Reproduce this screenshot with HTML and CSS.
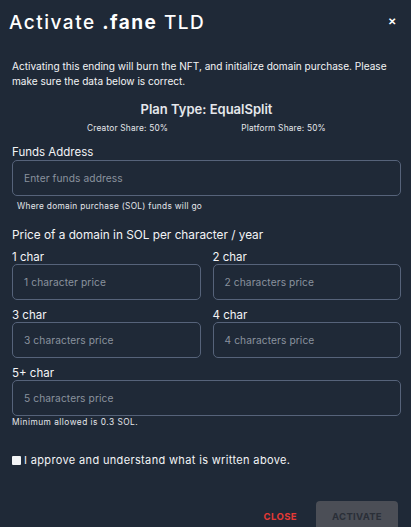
FILE: index.html
```html
<!DOCTYPE html>
<html>
<head>
<meta charset="utf-8">
<link rel="stylesheet" href="styles.css">
</head>
<body>
<div class="modal">
  <div class="header">
    <h1 class="title">Activate <b>.fane</b> TLD</h1>
    <span class="close-x">&#x2715;</span>
  </div>
  <p class="intro">Activating this ending will burn the NFT, and initialize domain purchase. Please make sure the data below is correct.</p>
  <div class="plan">Plan Type: EqualSplit</div>
  <div class="shares">
    <span>Creator Share: 50%</span>
    <span>Platform Share: 50%</span>
  </div>
  <label class="label label-funds">Funds Address</label>
  <div class="input wide">Enter funds address</div>
  <div class="helper">Where domain purchase (SOL) funds will go</div>
  <div class="section">Price of a domain in SOL per character / year</div>
  <div class="grid">
    <div class="field">
      <label class="label">1 char</label>
      <div class="input">1 character price</div>
    </div>
    <div class="field">
      <label class="label">2 char</label>
      <div class="input">2 characters price</div>
    </div>
    <div class="field">
      <label class="label">3 char</label>
      <div class="input">3 characters price</div>
    </div>
    <div class="field">
      <label class="label">4 char</label>
      <div class="input">4 characters price</div>
    </div>
    <div class="field full">
      <label class="label">5+ char</label>
      <div class="input">5 characters price</div>
    </div>
  </div>
  <div class="minimum">Minimum allowed is 0.3 SOL.</div>
  <div class="approve">
    <span class="box"></span>
    <span>I approve and understand what is written above.</span>
  </div>
  <div class="actions">
    <span class="btn-close">CLOSE</span>
    <span class="btn-activate">ACTIVATE</span>
  </div>
</div>
</body>
</html>
```
FILE: styles.css
```css
* { box-sizing: border-box; }
html, body {
  margin: 0;
  padding: 0;
  background: #1f2937;
  color: #ffffff;
  font-family: Inter, "Noto Sans", sans-serif;
  overflow: hidden;
}
.modal {
  width: 411px;
  height: 527px;
  padding: 0 10px 0 12px;
}
.header {
  display: flex;
  justify-content: space-between;
  align-items: center;
  height: 44px;
  margin-left: -3px;
  padding-right: 5px;
}
.title {
  margin: 0;
  font-size: 19px;
  font-weight: 500;
  letter-spacing: 1.5px;
}
.title b { font-weight: 700; }
.close-x {
  font-size: 10px;
  font-weight: 700;
  margin-top: -3px;
}
.intro {
  margin: 15px 0 0;
  font-size: 10.1px;
  line-height: 14.5px;
  color: #f3f4f6;
}
.plan {
  text-align: center;
  font-size: 13px;
  font-weight: 600;
  margin-top: 13px;
  color: #e5e7eb;
}
.shares {
  display: flex;
  justify-content: center;
  gap: 73px;
  font-size: 8.3px;
  letter-spacing: 0.2px;
  margin-top: 6px;
  color: #e5e7eb;
}
.label {
  display: block;
  font-size: 11.5px;
  line-height: 14px;
  color: #f3f4f6;
}
.label-funds { margin-top: 12px; }
.input {
  height: 36px;
  border: 1px solid #56637a;
  border-radius: 5px;
  display: flex;
  align-items: center;
  padding-left: 11px;
  font-size: 10.2px;
  letter-spacing: 0.1px;
  color: #8a929e;
}
.input.wide { margin-top: 1px; }
.helper {
  font-size: 8.3px;
  letter-spacing: 0.3px;
  color: #e5e7eb;
  margin: 5px 0 0 5px;
}
.section {
  font-size: 11.8px;
  margin-top: 17px;
  color: #f3f4f6;
}
.grid {
  display: grid;
  grid-template-columns: 1fr 1fr;
  column-gap: 12px;
  row-gap: 8px;
  margin-top: 8px;
}
.field.full { grid-column: 1 / 3; }
.minimum {
  font-size: 8.3px;
  letter-spacing: 0.5px;
  color: #e5e7eb;
  margin-top: 1px;
}
.approve {
  display: flex;
  align-items: center;
  gap: 3px;
  margin-top: 26px;
  font-size: 11px;
  letter-spacing: 0.35px;
  color: #f3f4f6;
}
.box {
  width: 9px;
  height: 9px;
  background: #f3f4f6;
  border-radius: 1px;
}
.actions {
  display: flex;
  justify-content: flex-end;
  align-items: center;
  gap: 19px;
  margin-top: 34px;
  padding-right: 3px;
}
.btn-close {
  color: #e53935;
  font-size: 9.5px;
  font-weight: 700;
  letter-spacing: 0.4px;
}
.btn-activate {
  background: #4b4e56;
  color: #2a2f38;
  font-size: 9.5px;
  font-weight: 700;
  letter-spacing: 0.3px;
  width: 82px;
  height: 30px;
  border-radius: 4px;
  display: flex;
  align-items: center;
  justify-content: center;
}
```
